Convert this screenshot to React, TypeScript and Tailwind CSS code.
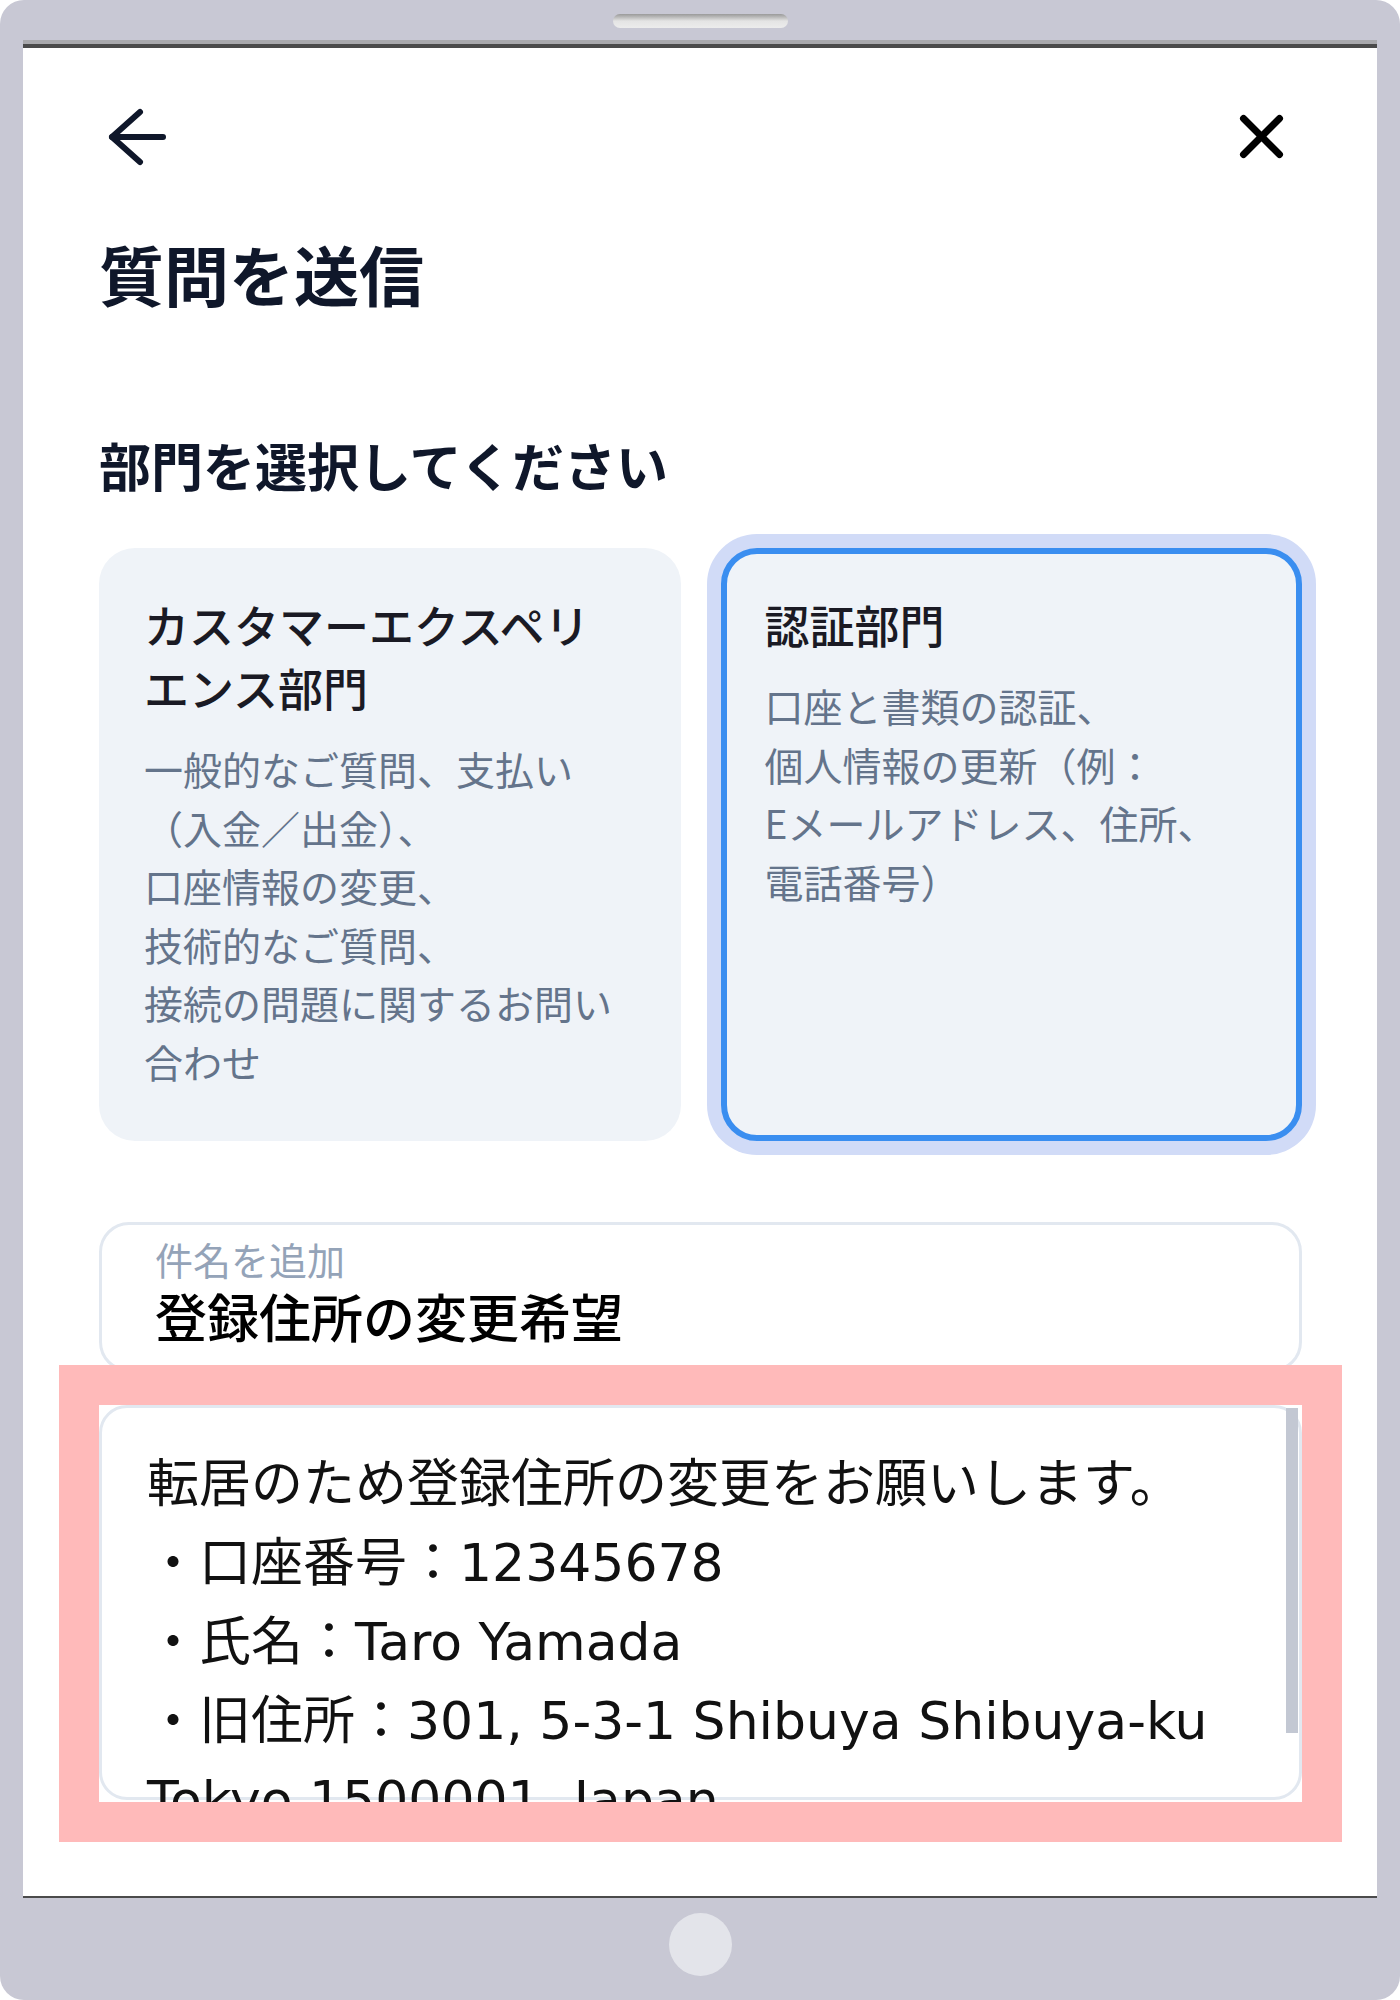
const CJK = "font-['Noto_Sans_CJK_JP',sans-serif]"

function BackIcon() {
  return (
    <svg width="70" height="60" viewBox="0 0 70 60" fill="none" stroke="#0f172a" strokeWidth="6" strokeLinecap="round" strokeLinejoin="round">
      <path d="M41 5 L13 30 L41 55" />
      <path d="M13 30 H64" />
    </svg>
  )
}

function CloseIcon() {
  return (
    <svg width="70" height="60" viewBox="0 0 70 60" fill="none" stroke="#000" strokeWidth="7" strokeLinecap="round">
      <path d="M11.5 11.5 L47.5 47.5" />
      <path d="M47.5 11.5 L11.5 47.5" />
    </svg>
  )
}

function DeptCard({ title, lines, selected }: { title: string[], lines: string[], selected?: boolean }) {
  return (
    <div
      className={
        selected
          ? 'rounded-[36px] bg-[#eff3f8] border-[6px] border-[#3a8ef0] shadow-[0_0_0_14px_#d1dbf7] pt-[39px] pl-[38px] pr-[44px]'
          : 'rounded-[36px] bg-[#eff3f8] pt-[45px] pl-[45px] pr-[50px]'
      }
    >
      <div className="text-[45px] leading-[63px] font-medium text-[#1a1a24]">
        {title.map(t => <div key={t}>{t}</div>)}
      </div>
      <div className="mt-[20px] text-[39px] leading-[58.5px] text-[#64748b]">
        {lines.map(l => <div key={l}>{l}</div>)}
      </div>
    </div>
  )
}

export default function App() {
  return (
    <div className={`w-[1400px] h-[2000px] bg-white ${CJK}`}>
      <div className="w-full h-full rounded-[24px] bg-[#c8c8d4] flex flex-col">
        {/* top bezel */}
        <div className="h-[40px] flex justify-center pt-[14px]">
          <div className="w-[175px] h-[14px] rounded-full bg-linear-to-b from-[#9a9a9a] via-[#e4e4e4] to-[#ececec]" />
        </div>
        <div className="mx-[23px] h-[4px] bg-[#a9a9ad]" />

        {/* screen */}
        <div className="mx-[23px] h-[1854px] bg-white border-t-4 border-b-2 border-[#4b4b4b] pl-[76px] pr-[75px] overflow-hidden">
          <div className="pt-[59px] h-[119px] flex justify-between">
            <BackIcon />
            <CloseIcon />
          </div>

          <h1 className="mt-[74px] text-[65px] leading-[64px] font-bold text-[#0f172a]">質問を送信</h1>

          <h2 className="mt-[134px] text-[52px] leading-[51px] font-bold text-[#0f172a]">部門を選択してください</h2>

          <div className="mt-[58px] h-[593px] grid grid-cols-2 gap-[40px]">
            <DeptCard
              title={['カスタマーエクスペリ', 'エンス部門']}
              lines={['一般的なご質問、支払い', '（入金／出金）、', '口座情報の変更、', '技術的なご質問、', '接続の問題に関するお問い', '合わせ']}
            />
            <DeptCard
              selected
              title={['認証部門']}
              lines={['口座と書類の認証、', '個人情報の更新（例：', 'Eメールアドレス、住所、', '電話番号）']}
            />
          </div>

          {/* subject */}
          <div className="mt-[81px] h-[150px] rounded-[30px] border-[3px] border-[#e2e8f0] pt-[12px] pl-[53px]">
            <div className="text-[38px] leading-[44px] text-[#94a3b8]">件名を追加</div>
            <div className="mt-[5px] text-[52px] leading-[60px] font-medium text-black">登録住所の変更希望</div>
          </div>

          {/* message, highlighted */}
          <div className="relative mt-[33px] h-[397px] bg-white outline-solid outline-[40px] outline-[#ffbaba] overflow-hidden">
            <div className="h-[395px] rounded-[28px] border-[3px] border-[#e2e8f0] pt-[37px] pl-[45px] pr-[40px]">
              <div className="font-['DejaVu_Sans','Noto_Sans_CJK_JP',sans-serif] text-[52px] leading-[79px] text-[#111] whitespace-pre-line">
                {'転居のため登録住所の変更をお願いします。\n・口座番号：12345678\n・氏名：Taro Yamada\n・旧住所：301, 5-3-1 Shibuya Shibuya-ku\nTokyo 1500001, Japan'}
              </div>
            </div>
            <div className="absolute right-[4px] top-[3px] w-[12px] h-[325px] bg-[#c3c8d3]" />
          </div>
        </div>

        {/* bottom bezel */}
        <div className="flex justify-center pt-[15px]">
          <div className="w-[63px] h-[63px] rounded-full bg-[#e3e4ea]" />
        </div>
      </div>
    </div>
  )
}
